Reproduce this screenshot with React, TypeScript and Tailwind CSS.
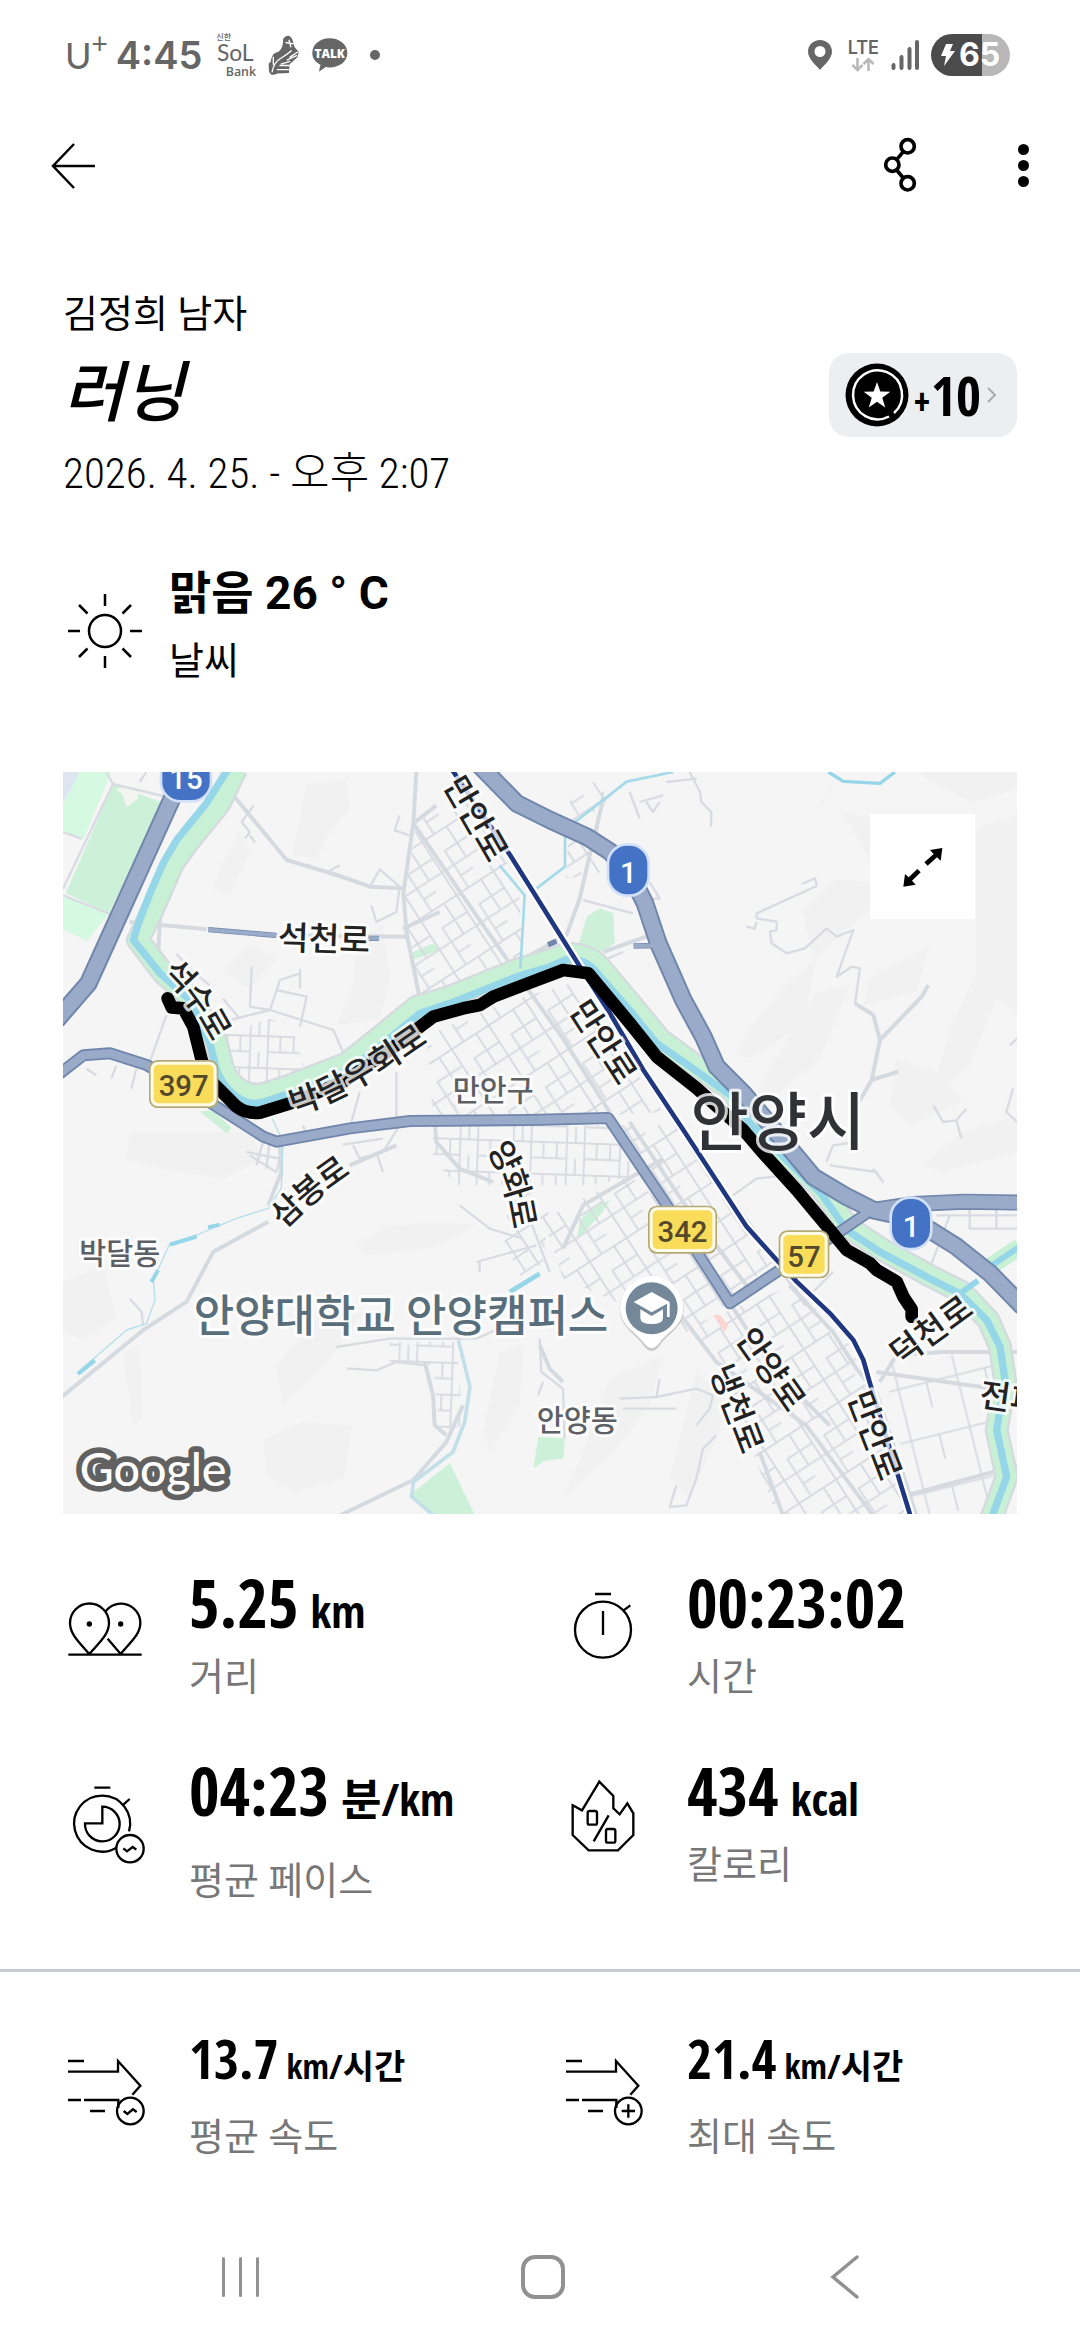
import type { ReactNode } from "react";

const NUM =
  "font-['Noto_Sans_ExtraCondensed','Open_Sans_Condensed','Roboto_Condensed','Noto_Sans_CJK_KR',sans-serif]";

function StatusBar() {
  return (
    <div className="flex h-[110px] items-center justify-between pr-[70px] pl-[65px] text-[#666]">
      <div className="flex items-center">
        <div className="flex items-start font-['Lato',sans-serif]">
          <span className="text-4xl leading-[44px]">U</span>
          <span className="text-[28px] leading-5">+</span>
        </div>
        <span className="ml-2 font-['Inter',sans-serif] text-[38px] leading-[44px] font-semibold">
          4:45
        </span>
        <svg viewBox="615 95 135 145" className="ml-3 h-12 w-11 fill-[#666]" aria-hidden="true">
          <text x="622" y="122" fontSize="25" fontWeight="500" className="font-['Noto_Sans_CJK_KR',sans-serif]">신한</text>
          <text x="624" y="186" fontSize="70" className="font-['Lato',sans-serif]">SoL</text>
          <text x="651" y="231" fontSize="38" fontWeight="600" className="font-['Open_Sans',sans-serif]">Bank</text>
        </svg>
        <svg viewBox="765 100 105 130" className="ml-2 h-11 w-9" aria-hidden="true">
          <path d="M815 118q6-11 18-10l8 8 8 26 12 14-4 16-23 20-2 26-34 2q-20 10-25-8l-1-22 6-4q4-30 22-30 16-10 15-38Z" fill="#666" />
          <path d="M782 216q6-30 24-40t34-24M858 156l-24 16M856 166l-30 14M836 184l-28 8M834 196h-30M832 208h-36M832 120l6 22M822 128l24 4M786 170v24" fill="none" stroke="#fff" strokeWidth="4" />
        </svg>
        <svg viewBox="896 110 116 110" className="ml-2 h-9 w-10" aria-hidden="true">
          <path d="M953 114c30 0 54 19 54 45s-24 44-54 44q-8 0-12-1l-21 14 5-21c-16-8-25-20-25-36 0-26 23-45 53-45Z" fill="#666" />
          <text x="953" y="174" textAnchor="middle" fontSize="36" fontWeight="800" fill="#fff" className="font-['Open_Sans',sans-serif]">TALK</text>
        </svg>
        <span className="ml-5 size-[10px] rounded-full bg-[#666]" />
      </div>
      <div className="flex items-center">
        <svg viewBox="0 0 24 32" className="h-8 w-6" aria-hidden="true">
          <path d="M12 1C5.400 1 0 6 0 12.500 0 20 8 26 12 31c4-5 12-11 12-18.500C24 6 18.600 1 12 1Zm0 17a5.500 5.500 0 1 1 0-11 5.500 5.500 0 0 1 0 11Z" fill="#666" />
        </svg>
        <div className="ml-4 flex flex-col items-center">
          <span className="font-['Inter',sans-serif] text-[18px] leading-5 font-semibold">LTE</span>
          <svg viewBox="0 0 24 14" className="h-[14px] w-6" fill="none" stroke="#b8b8b8" strokeWidth="2.500" aria-hidden="true">
            <path d="M6.500 0v12M1.500 7l5 5 5-5M17.500 13V1M12.500 6l5-5 5 5" />
          </svg>
        </div>
        <svg viewBox="0 0 28 30" className="ml-3 h-[30px] w-7" stroke="#666" strokeWidth="4" strokeLinecap="round" aria-hidden="true">
          <path d="M2.500 28v-3M10.500 28V17M18.500 28V9M26 28V2" />
        </svg>
        <div className="ml-3 flex h-[42px] w-[79px] items-center justify-center rounded-full bg-linear-to-r from-[#4b4b4b] from-65% to-[#b8b8b8] to-65% text-white">
          <svg viewBox="0 0 14 22" className="h-[22px] w-[14px]" fill="currentColor" aria-hidden="true">
            <path d="M5 0h7L9 7h5L3 22l2-10H0Z" />
          </svg>
          <span className="ml-1 font-['Inter',sans-serif] text-[32px] leading-[42px] font-bold">65</span>
        </div>
      </div>
    </div>
  );
}

function AppBar() {
  return (
    <header className="flex h-[110px] items-center justify-between pr-[43px] pl-[50px]">
      <button aria-label="뒤로" className="cursor-pointer">
        <svg viewBox="0 0 48 48" className="size-12" fill="none" stroke="#000" strokeWidth="2.500">
          <path d="M45 25H3M24 3 3 25l21 22" />
        </svg>
      </button>
      <div className="flex items-center gap-[92px]">
        <button aria-label="공유" className="cursor-pointer">
          <svg viewBox="990 408 102 168" className="h-14 w-[34px]" fill="none" stroke="#000" strokeWidth="11">
            <circle cx="1064" cy="436" r="20" />
            <circle cx="1018" cy="491" r="20" />
            <circle cx="1064" cy="547" r="20" />
            <path d="m1031 476 20-24M1031 507l20 24" />
          </svg>
        </button>
        <button aria-label="더보기" className="flex w-7 cursor-pointer flex-col items-center gap-[5px]">
          <span className="size-[11px] rounded-full bg-black" />
          <span className="size-[11px] rounded-full bg-black" />
          <span className="size-[11px] rounded-full bg-black" />
        </button>
      </div>
    </header>
  );
}

interface LabelProps {
  x: number;
  y: number;
  rotate?: number;
  size?: number;
  fill?: string;
  weight?: number;
  children: string;
}

function MapLabel({ x, y, rotate = 0, size = 100, fill = "#222", weight = 500, children }: LabelProps) {
  return (
    <text
      x={x}
      y={y - size * 0.06}
      transform={`rotate(${rotate} ${x} ${y})`}
      textAnchor="middle"
      dominantBaseline="central"
      fontSize={size}
      fontWeight={weight}
      fill={fill}
      stroke="#fff"
      strokeOpacity="0.8"
      strokeWidth="18"
      strokeLinejoin="round"
      paintOrder="stroke"
    >
      {children}
    </text>
  );
}

function CurvedLabel({ id, d, children }: { id: string; d: string; children: string }) {
  return (
    <text
      dominantBaseline="central"
      fontSize="98"
      fontWeight="500"
      fill="#222"
      stroke="#fff"
      strokeOpacity="0.8"
      strokeWidth="18"
      strokeLinejoin="round"
      paintOrder="stroke"
    >
      <path id={id} d={d} fill="none" />
      <textPath href={`#${id}`} startOffset="50%" textAnchor="middle">
        {children}
      </textPath>
    </text>
  );
}

function RoadBadge({ x, y, width, children }: { x: number; y: number; width: number; children: string }) {
  return (
    <g>
      <rect x={x} y={y} width={width} height="144" rx="26" fill="#b3aa78" />
      <rect x={x + 5} y={y + 5} width={width - 10} height="134" rx="22" fill="#fffbe6" />
      <rect x={x + 14} y={y + 14} width={width - 28} height="116" rx="15" fill="#f9dc5a" />
      <text x={x + width / 2} y={y + 109} textAnchor="middle" fontSize="88" fontWeight="500" fill="#54492a" className="font-['Roboto',sans-serif]">
        {children}
      </text>
    </g>
  );
}

function HighwayBadge({ x, y, width = 122, children }: { x: number; y: number; width?: number; children: string }) {
  return (
    <g>
      <rect x={x} y={y} width={width} height="154" rx="58" fill="#4473c5" stroke="#d3e0fa" strokeWidth="8" />
      <text x={x + width / 2} y={y + 117} textAnchor="middle" fontSize="88" fontWeight="500" fill="#fff" className="font-['Roboto',sans-serif]">
        {children}
      </text>
    </g>
  );
}

const RIVER =
  "M496 -10L430 94 341 204 300 274 261 364 226 454 211 504 291 604 381 684 441 814 461 894Q480 945 521 974T601 990L681 964 861 894 961 814 1071 724 1161 694 1361 614 1461 584 1511 562Q1560 560 1591 590L1701 716 1781 814 1901 898 2001 968 2061 1054 2181 1174 2271 1260 2351 1374 2451 1440 2601 1520 2691 1565 2771 1644 2811 1724 2826 1824 2801 1974 2831 2114 2785 2240";
const RIVERSIDE =
  "M520 -10L470 94 381 204 330 274 291 364 250 454 225 504 301 604 391 684 461 814 481 894Q500 935 531 954T601 966L671 944 851 874 951 794 1061 704 1161 674 1361 594 1461 564 1511 545Q1570 545 1606 580L1711 704 1791 802 1906 886 2006 956 2068 1044 2186 1164 2276 1250 2356 1366 2456 1432 2606 1514 2696 1560 2776 1644 2811 1724 2826 1824 2801 1974 2831 2114 2785 2240";
const HIGHWAY_15 = "M385 -40L325 84 76 634 -20 745";
const HIGHWAY_1 =
  "M1240 -30L1361 94 1461 144 1571 194 1641 239 1701 304 1746 394 1786 514 1861 684 1921 794 1961 884 2041 964 2151 1094 2201 1154 2251 1214 2351 1274 2431 1314 2501 1329 2601 1374 2681 1424 2781 1504 2880 1605";
const HIGHWAY_EAST = "M2431 1314L2551 1296 2701 1289 2880 1292";
const ARTERIAL =
  "M2411 1324L2331 1379 2141 1500 2001 1594 1911 1454 1801 1284 1636 1038 1401 1044 1041 1047 861 1069 641 1109 601 1094 461 1004 251 879 141 844 61 850 -10 905";
const RAIL =
  "M1165 -10L1341 249 1401 344 1551 584 1641 724 1741 894 1861 1074 2051 1364 2141 1464 2201 1529 2301 1624 2371 1704 2401 1764 2421 1834 2506 2114 2545 2240";
const ROUTE =
  "M314 679L326 706 361 709 391 764 416 864Q435 925 471 954L521 1004Q550 1026 591 1022L681 994 840 930 960 850 1071 764 1111 734 1201 709 1251 699 1291 674 1401 632 1501 594 1576 604 1701 754 1781 854 1901 949 2041 1074 2101 1144 2201 1254 2301 1374 2351 1434 2421 1474 2441 1494 2501 1529 2521 1574 2546 1612 2546 1634";

function RouteMap() {
  return (
    <svg viewBox="0 0 2862 2226" className="block w-full font-['Noto_Sans_CJK_KR',sans-serif]" role="img" aria-label="러닝 경로 지도">
      <defs>
        <pattern id="blocks" width="190" height="132" patternUnits="userSpaceOnUse" patternTransform="rotate(57)">
          <path d="M0 3H190M0 48H110M60 92H190M3 0V132M62 0V92M112 3V132M150 48V92" stroke="#d8dce2" strokeWidth="6" fill="none" />
        </pattern>
        <pattern id="flatBlocks" width="160" height="96" patternUnits="userSpaceOnUse" patternTransform="rotate(2)">
          <path d="M0 3H160M0 50H110M3 0V96M40 0V50M80 0V50M110 3V96M136 50V96" stroke="#d8dce2" strokeWidth="6" fill="none" />
        </pattern>
        <pattern id="wideBlocks" width="180" height="160" patternUnits="userSpaceOnUse" patternTransform="rotate(-14)">
          <path d="M0 4H180M4 0V160M90 0V80" stroke="#d8dce2" strokeWidth="6" fill="none" />
        </pattern>
      </defs>
      <rect width="2862" height="2226" fill="#f5f5f5" />

      {/* hills */}
      <g fill="#f1f1f1">
        <path d="M730 40L850 20 860 110 800 180 760 260 690 250 700 190Z" />
        <path d="M470 290L530 180 560 240 500 370 450 350Z" />
        <path d="M880 500L960 460 980 620 950 740 820 760 870 640Z" />
        <path d="M480 600L560 520 640 560 560 650Z" />
        <path d="M200 1080H560L600 1160 480 1220 300 1190 190 1160Z" />
        <path d="M0 1530L120 1480 160 1640 60 1700 0 1680Z" />
        <path d="M640 1780L760 1640 900 1620 800 1760 660 1900Z" />
        <path d="M600 2000L720 1950 870 1960 840 2120 700 2160 610 2110Z" />
        <path d="M180 1740L230 1720 240 1940 210 1960Z" />
        <path d="M880 1420L980 1360 1160 1350 1240 1360 1100 1430 900 1450Z" />
        <path d="M1310 1740L1380 1720 1370 1900 1280 2040 1260 1980Z" />
        <path d="M1640 1820L1800 1750 1760 1900 1650 2040 1500 2180 1560 2040Z" />
        <path d="M2220 420L2320 320 2480 340 2390 440 2250 560Z" />
        <path d="M2170 640L2260 560 2220 760 2060 860 2020 840 2080 740Z" />
        <path d="M2260 660L2360 640 2270 860 2150 960 2080 960Z" />
        <path d="M2560 0L2720 90 2862 50V0Z" />
        <path d="M2740 170L2862 130V720L2800 680 2720 880 2600 980 2660 780 2740 600Z" />
        <path d="M2500 860L2620 900 2700 990 2540 1060 2480 1000Z" />
        <path d="M2580 1180L2700 1080 2862 1030V1140L2640 1200Z" />
        <path d="M2250 110L2300 70 2310 30 2280 100Z" />
        <path d="M2340 120L2560 160 2600 260 2440 300Z" />
        <path d="M2420 620L2600 520 2560 660 2400 700Z" />
        <path d="M1900 1800L2000 1900 1880 2180 1820 2120Z" />
      </g>

      {/* parks */}
      <g fill="#ccf1d8">
        <path d="M0 0L60 0 0 90Z" fill="#dde5f1" />
        <path d="M50 0H145L60 204 0 176V96Z" fill="#d5f9e1" />
        <path d="M150 38L295 90 138 424 8 364Z" />
        <path d="M160 50L225 44V80L190 106 180 70Z" fill="#f4f4f0" />
        <path d="M0 372L135 428 72 506 0 472Z" fill="#d5f9e1" />
        <path d="M1546 520L1571 434 1611 409 1651 424 1655 514 1591 554Z" />
        <path d="M1641 1284L1616 1324 1541 1404 1551 1344 1591 1304Z" />
        <path d="M1041 544L1111 514 1126 534 1051 564Z" />
        <path d="M411 1019L451 1014 506 1069 491 1084Z" />
        <path d="M1161 2074L1236 2230H1101L1046 2164Z" />
        <path d="M1426 1994L1506 1999 1501 2059 1446 2066 1411 2089Z" />
      </g>

      {/* street grids */}
      <path d="M1060 160L1180 40 1320 240 1370 380 1380 590 1080 680 1025 480 1025 370Z" fill="url(#blocks)" />
      <path d="M1090 790L1330 690 1540 630 1800 1020 1636 1030 1110 1030Z" fill="url(#blocks)" />
      <path d="M1110 1060H1640L1720 1210 1590 1240H1180L1110 1160Z" fill="url(#flatBlocks)" />
      <path d="M1660 1060L1840 1060 2130 1470 2000 1580Z" fill="url(#blocks)" />
      <path d="M1440 1340L1700 1210 1800 1300 1990 1600 1870 1680 1500 1520Z" fill="url(#blocks)" />
      <path d="M1890 1660L2190 1540 2360 1720 2420 1860 2530 2230H2140L2040 1960Z" fill="url(#blocks)" />
      <path d="M2460 1780L2800 1730 2790 2230H2560Z" fill="url(#wideBlocks)" />
      <path d="M480 790L620 740 690 770 720 880 670 930 560 950 500 900Z" fill="url(#flatBlocks)" />
      <path d="M980 1710H1180L1200 1960 1130 1980 1110 1780 980 1770Z" fill="url(#flatBlocks)" />
      <path d="M1520 80L1620 10 1650 70 1560 150 1620 300 1510 320Z" fill="url(#blocks)" />
      <path d="M1350 1230L1460 1290 1440 1470 1380 1530 1320 1400Z" fill="url(#blocks)" />

      {/* minor roads */}
      <g fill="none" stroke="#d8dce2" strokeWidth="7" strokeLinejoin="round">
        <path d="M0 180L55 200M0 370L160 434M150 36L0 350M150 36L300 72M230 30L250 0M130 0L150 36" />
        <path d="M572 100L536 150 560 180 546 200M560 190L576 212M1010 130L995 175 1040 190" />
        <path d="M566 584L561 704 621 714 651 624 711 604M641 654L731 674 711 764M501 744L621 714 811 774 846 854M711 590V650" />
        <path d="M921 344L950 292 1010 344 1000 420 940 450 925 400M740 290V275M800 296L830 280" />
        <path d="M440 640L380 590 340 545M480 680L530 740" />
        <path d="M310 730L250 900M160 880L145 920M70 890L100 910M220 890L205 950" />
        <path d="M860 1069L890 960M1000 1040V900M720 1060L730 1090 760 1075" />
        <path d="M551 1140L650 1160 640 1200 560 1150M600 1110L580 1180M620 1110L610 1190M840 1118L960 1100M870 1120L890 1160 960 1140 1010 1060M940 1140L960 1200" />
        <path d="M1190 1300L1280 1370 1380 1400M1240 1470L1420 1420M1250 1465V1500M1400 1340L1460 1500" />
        <path d="M820 1725L980 1700 1240 1700 1330 1660M851 1789L940 1795 1000 1770 1090 1780M200 1580L236 1620 240 1660" />
        <path d="M1430 1700L1435 1800 1500 1850 1505 2000M1425 1870L1440 1830M1670 1880L1780 1875 1790 1820M1680 1910L1840 1910M1780 1875L1900 1850 1950 1870 1940 1910 1900 1960" />
        <path d="M1960 1990L1920 2030 1900 2120 1870 2200 1820 2205 1840 2140" />
        <path d="M2216 336L2256 319 2261 342 2081 424V439L2141 449V474L2121 479 2126 514 2171 544 2226 529 2291 469 2321 494 2371 474 2321 614 2366 584 2391 589 2376 694M2050 464L2075 470 2081 450" />
        <path d="M1880 0L1911 60 1915 90 1945 120 1944 164M1700 60L1730 140M1730 90L1800 70M1750 90L1770 120 1790 90M1810 30L1900 20" />
        <path d="M2611 1000L2640 1050 2680 1045 2710 1010M2680 1045L2695 1100M2850 950L2830 1020 2862 1050M2840 820L2862 800" />
        <path d="M2290 1170L2310 1120 2380 1110 2360 1080M2300 1180L2440 1200 2460 1230 2430 1190M2010 1270L2080 1220 2160 1210" />
        <path d="M2250 1560L2310 1500M2660 1330L2600 1490M2720 1290V1370H2862M2800 1310V1370M2620 1330H2862M1770 380L1790 380 1760 330" />
        <path d="M1560 384L1710 424M1620 60L1600 190M1565 590L1680 540" />
      </g>

      {/* collector roads */}
      <g fill="none" stroke="#d5dae0" strokeWidth="12" strokeLinejoin="round">
        <path d="M1060 0L1051 154 1021 364 1031 484 1071 684" />
        <path d="M1051 154L1200 372 1361 604 1500 800 1640 1020M1120 100L1051 154" />
        <path d="M481 34L671 264 821 309 921 344 1021 349" />
        <path d="M491 74L361 254 291 440 285 560M200 450L431 472M600 490L1030 494M1020 470L1130 420" />
        <path d="M-10 1880L241 1674 371 1589 451 1439 616 1349M651 1110L655 1200 616 1300" />
        <path d="M1085 1770L1110 1870 1115 1960 1150 1990M831 2230L1051 2124 1150 2010 1200 1900" />
        <path d="M1115 1050L1120 1110 1190 1190 1290 1230M1000 1120L860 1180" />
        <path d="M1620 84L1580 250 1550 380 1510 490 1401 550M1620 540L1760 490" />
        <path d="M2376 694L2431 729 2451 804 2426 924 2386 994M2451 804L2576 674 2596 639M2426 924L2506 899" />
        <path d="M1500 1430L1560 1300 1800 1160M1430 1720L1460 1790 1500 1830" />
        <path d="M1830 1600L1960 1770 2230 1960 2430 2230M2090 2040L2160 2230M2001 1594L2130 1790 2300 1960" />
        <path d="M2180 1540L2310 1680 2380 1790 2440 1860 2560 2230M2440 1800L2862 1860M2450 1830L2500 1750 2640 1740 2862 1740M2530 2170L2862 2080" />
        <path d="M1840 1050L2090 1400 2230 1600M1700 1050L1860 1290 2050 1540" />
      </g>

      {/* river */}
      <g fill="none" strokeLinejoin="round">
        <path d={RIVERSIDE} stroke="#d5dadf" strokeWidth="72" />
        <path d={RIVERSIDE} stroke="#c8f0d4" strokeWidth="58" />
        <path d={RIVER} stroke="#95d6e9" strokeWidth="22" />
        <path d="M2781 1484L2870 1424" stroke="#c8f0d4" strokeWidth="52" />
        <path d="M2781 1484L2870 1424" stroke="#95d6e9" strokeWidth="18" />
        <path d="M2686 1568L2745 1526" stroke="#95d6e9" strokeWidth="18" />
        <path d="M1831 0L1691 29 1531 154 1506 194 1506 284 1421 349" stroke="#a5dbe9" strokeWidth="8" />
        <path d="M1310 280L1385 370 1372 590" stroke="#a5dbe9" strokeWidth="8" />
        <path d="M2296 0L2341 28 2451 34 2496 0" stroke="#95d6e9" strokeWidth="10" />
        <path d="M628 1040L660 1110 655 1250 616 1309 521 1339 401 1389 321 1414 271 1524 276 1584 251 1654 191 1674 41 1804" stroke="#b5dfea" strokeWidth="4" />
        <path d="M321 1418L401 1394M265 1530L285 1495M45 1806L95 1765M435 1366L470 1358" stroke="#95d6e9" strokeWidth="12" />
        <path d="M1186 1704L1221 1844 1205 1950 1170 2040 1051 2130 1046 2174 1111 2230" stroke="#c3dfe8" strokeWidth="11" />
        <path d="M1340 1560L1430 1505" stroke="#95d6e9" strokeWidth="14" />
      </g>

      {/* highways */}
      <g fill="none" strokeLinejoin="round">
        <g stroke="#7186ac">
          <path d={ARTERIAL} strokeWidth="36" />
          <path d={HIGHWAY_15} strokeWidth="56" />
          <path d={HIGHWAY_1} strokeWidth="56" />
          <path d={HIGHWAY_EAST} strokeWidth="48" />
          <path d="M436 473L640 490M915 499H948M1712 522L1800 520M1455 518L1480 508" strokeWidth="16" />
        </g>
        <g stroke="#9aabc9">
          <path d={ARTERIAL} strokeWidth="25" />
          <path d={HIGHWAY_15} strokeWidth="44" />
          <path d={HIGHWAY_1} strokeWidth="44" />
          <path d={HIGHWAY_EAST} strokeWidth="38" />
          <path d="M436 473L640 490M915 499H948M1712 522L1800 520" strokeWidth="12" />
        </g>
        <path d={RAIL} stroke="#fff" strokeWidth="28" />
        <path d={RAIL} stroke="#1f3680" strokeWidth="14" />
        <path d={ROUTE} stroke="#000" strokeWidth="38" strokeLinecap="round" />
        <path d="M1950 1630L1970 1628 1996 1660 1984 1680Z" fill="#fbd5d2" />
      </g>

      <HighwayBadge x={294} y={-66} width={150}>15</HighwayBadge>
      <HighwayBadge x={1635} y={217}>1</HighwayBadge>
      <HighwayBadge x={2483} y={1277}>1</HighwayBadge>
      <RoadBadge x={258} y={864} width={208}>397</RoadBadge>
      <RoadBadge x={1755} y={1301} width={207}>342</RoadBadge>
      <RoadBadge x={2147} y={1375} width={152}>57</RoadBadge>

      <MapLabel x={1241} y={139} rotate={60}>만안로</MapLabel>
      <MapLabel x={783} y={499} rotate={2}>석천로</MapLabel>
      <CurvedLabel id="seoksu" d="M314 562C374 615 434 685 494 805">석수로</CurvedLabel>
      <CurvedLabel id="bakdal-bypass" d="M648 995C788 960 898 895 1098 755">박달우회로</CurvedLabel>
      <CurvedLabel id="yanghwa" d="M1299 1092C1345 1157 1380 1247 1398 1387">양화로</CurvedLabel>
      <CurvedLabel id="sambong" d="M622 1350C692 1280 752 1225 852 1160">삼봉로</CurvedLabel>
      <MapLabel x={1623} y={809} rotate={57}>만안로</MapLabel>
      <MapLabel x={2126} y={1791} rotate={55}>안양로</MapLabel>
      <MapLabel x={2023} y={1909} rotate={69}>냉천로</MapLabel>
      <MapLabel x={2438} y={1990} rotate={69}>만안로</MapLabel>
      <MapLabel x={2603} y={1674} rotate={-36}>덕천로</MapLabel>
      <MapLabel x={2888} y={1884} rotate={8}>전파로</MapLabel>
      <MapLabel x={1291} y={954} size={88} fill="#5c5f63">만안구</MapLabel>
      <MapLabel x={170} y={1441} size={88} fill="#5c5f63">박달동</MapLabel>
      <MapLabel x={1543} y={1943} size={88} fill="#5c5f63">안양동</MapLabel>
      <MapLabel x={2145} y={1048} size={190} fill="#303236">안양시</MapLabel>
      <MapLabel x={1014} y={1631} size={132} fill="#596e7b">안양대학교 안양캠퍼스</MapLabel>

      {/* campus pin */}
      <path d="M1766 1736q-14 0-26-18c-22-32-70-52-70-109a96 96 0 0 1 192 0c0 57-48 77-70 109q-12 18-26 18Z" fill="#9a9a9a" opacity="0.500" />
      <path d="M1766 1728q-12 0-24-16c-22-32-71-50-71-105a95 95 0 0 1 190 0c0 55-49 73-71 105q-12 16-24 16Z" fill="#fff" />
      <circle cx="1766" cy="1609" r="78" fill="#74889a" />
      <path d="M1766 1560l-54 30 54 31 46-26v40h8v-45ZM1732 1612v26q0 18 34 18t34-18v-26l-34 20Z" fill="#fff" />

      <text x="50" y="2142" fontSize="140" fontWeight="500" fill="#fff" stroke="#616161" strokeWidth="34" strokeLinejoin="round" paintOrder="stroke" className="font-['Lato',sans-serif]">
        Google
      </text>
    </svg>
  );
}

function StatIcon({ box, children }: { box: string; children: ReactNode }) {
  return (
    <svg viewBox={box} className="mt-4 size-24 shrink-0" fill="none" stroke="#000" strokeWidth="7" aria-hidden="true">
      {children}
    </svg>
  );
}

function DistanceIcon() {
  return (
    <StatIcon box="69 121 288 288">
      <path d="M85 345H305M148 343C118 308 90 284 90 250a58 58 0 0 1 117 0c0 34-29 58-59 93ZM196 216a58 58 0 0 1 105 34c0 34-30 58-59 93l-39-46" />
      <circle cx="148" cy="253" r="8" fill="#000" stroke="none" />
      <circle cx="242" cy="253" r="8" fill="#000" stroke="none" />
    </StatIcon>
  );
}

function TimerIcon() {
  return (
    <StatIcon box="63 121 288 288">
      <circle cx="189" cy="270" r="84" />
      <path d="M165 163h48M189 214v72M250 213l21-16" />
    </StatIcon>
  );
}

function PaceIcon() {
  return (
    <StatIcon box="69 691 288 288">
      <path d="M229 930a84 84 0 1 1 38-49M163 750h48M250 801l19-17M187 807v50h-52a52 52 0 1 0 52-50Z" />
      <circle cx="270" cy="933" r="41" />
      <path d="M250 932l11 9 17-13 11 8" />
    </StatIcon>
  );
}

function CalorieIcon() {
  return (
    <StatIcon box="63 685 288 288">
      <path d="M98 797l28 15 52-86 42 43v37l19 18 23-33 18 30v65l-46 46h-88l-48-46ZM161 905l45-78" />
      <rect x="143" y="814" width="28" height="41" rx="6" />
      <rect x="198" y="868" width="28" height="41" rx="6" />
    </StatIcon>
  );
}

function SpeedIcon({ max }: { max?: boolean }) {
  return (
    <StatIcon box="0 -9 288 288">
      <path d="M15 66h48M15 98h150V66l67 74-24 27M15 183h39M63 183h103v24M81 216h45" />
      <circle cx="202" cy="216" r="40" />
      {max ? <path d="M202 196v40M182 216h40" /> : <path d="M182 216l11 9 17-14 11 8" />}
    </StatIcon>
  );
}

interface StatProps {
  icon: ReactNode;
  value: string;
  unit?: string;
  label: string;
  small?: boolean;
  tall?: boolean;
}

function Stat({ icon, value, unit, label, small, tall }: StatProps) {
  return (
    <div className="flex gap-[30px]">
      {icon}
      <div className="flex flex-col">
        <p className={`${NUM} flex items-baseline font-bold ${small ? "gap-2 pb-1" : "gap-3"} ${tall ? "pb-4" : ""}`}>
          <span className={small ? "text-[54px] leading-[76px]" : "text-[66px] leading-[76px]"}>{value}</span>
          {unit && <span className={small ? "text-[34px] leading-none" : "text-[44px] leading-none"}>{unit}</span>}
        </p>
        <p className="mt-[13px] text-[38px] leading-12 text-[#777]">{label}</p>
      </div>
    </div>
  );
}

export default function App() {
  return (
    <div className="flex min-h-screen flex-col bg-white font-['Roboto','Noto_Sans_CJK_KR',sans-serif] text-black">
      <StatusBar />
      <AppBar />
      <main>
        <section className="flex items-start justify-between px-[63px] pt-[67px]">
          <div>
            <p className="text-[38px] leading-[54px]">김정희 남자</p>
            <h1 className="text-[66px] leading-[106px] font-medium italic">러닝</h1>
            <p className="font-['Roboto_Condensed','Noto_Sans_CJK_KR',sans-serif] text-[43px] leading-[52px] font-light">
              2026. 4. 25. - 오후 2:07
            </p>
          </div>
          <button className="mt-[66px] flex h-[84px] w-[188px] cursor-pointer items-center rounded-[20px] bg-[#eceeef] pl-4">
            <svg viewBox="0 0 64 64" className="size-16 shrink-0" aria-hidden="true">
              <circle cx="32" cy="32" r="31.500" />
              <path d="M44 53.500A24.500 24.500 0 1 1 49 50" fill="none" stroke="#fff" strokeWidth="2.500" />
              <path d="m32 19 3.300 9.500 10 .2-8 6.100 2.900 9.700-8.200-5.800-8.200 5.800 2.900-9.700-8-6.100 10-.2Z" fill="#fff" />
            </svg>
            <span className={`${NUM} ml-1 flex items-baseline font-bold`}>
              <span className="text-[40px]">+</span>
              <span className="text-[54px] leading-[84px]">10</span>
            </span>
            <svg viewBox="0 0 10 16" className="mr-5 ml-auto h-4 w-[10px]" fill="none" stroke="#aaa" strokeWidth="2" aria-hidden="true">
              <path d="m1 1 7 7-7 7" />
            </svg>
          </button>
        </section>

        <section className="mt-[58px] flex items-center gap-[22px] px-[63px]">
          <svg viewBox="-3 -3 84 84" className="mt-3 size-[84px]" fill="none" stroke="#000" strokeWidth="2.500" aria-hidden="true">
            <circle cx="39" cy="39" r="16" />
            <path d="M39 2v12M39 64v12M2 39h12M64 39h12M13 13l8.500 8.500M56.500 56.500l8.500 8.500M13 65l8.500-8.500M56.500 21.500l8.500-8.500" />
          </svg>
          <div>
            <p className="text-[46px] leading-[72px] font-bold">맑음 26 ° C</p>
            <p className="text-[38px] leading-[64px]">날씨</p>
          </div>
        </section>

        <section className="relative mx-[63px] mt-[79px]">
          <RouteMap />
          <button aria-label="지도 확대" className="absolute top-[42px] right-[42px] flex size-[105px] cursor-pointer items-center justify-center bg-white">
            <svg viewBox="1115 256 126 126" className="size-[42px]">
              <path d="M1236 262l-5 38-11-10-28 25-10-10 28-25-11-12ZM1119 378l5-38 11 10 26-25 10 10-26 25 11 12Z" />
            </svg>
          </button>
        </section>

        <section className="mt-[50px] grid grid-cols-2 gap-y-[51px] pr-[21px] pl-[63px]">
          <Stat icon={<DistanceIcon />} value="5.25" unit="km" label="거리" />
          <Stat icon={<TimerIcon />} value="00:23:02" label="시간" />
          <Stat icon={<PaceIcon />} value="04:23" unit="분/km" label="평균 페이스" tall />
          <Stat icon={<CalorieIcon />} value="434" unit="kcal" label="칼로리" />
        </section>

        <hr className="mt-16 border-t-[3px] border-[#c8cad2]" />

        <section className="mt-12 grid grid-cols-2 pr-[21px] pl-[63px]">
          <Stat icon={<SpeedIcon />} value="13.7" unit="km/시간" label="평균 속도" small />
          <Stat icon={<SpeedIcon max />} value="21.4" unit="km/시간" label="최대 속도" small />
        </section>
      </main>

      <nav className="mt-auto flex h-[126px] items-center justify-between pr-[212px] pl-[218px]">
        <button aria-label="최근 앱" className="flex h-11 w-11 cursor-pointer items-center justify-center gap-[14px]">
          <span className="h-10 w-[3px] rounded-full bg-[#919191]" />
          <span className="h-10 w-[3px] rounded-full bg-[#919191]" />
          <span className="h-10 w-[3px] rounded-full bg-[#919191]" />
        </button>
        <button aria-label="홈" className="size-11 cursor-pointer rounded-[14px] border-[4px] border-[#919191]" />
        <button aria-label="뒤로 가기" className="cursor-pointer">
          <svg viewBox="0 0 44 44" className="size-11" fill="none" stroke="#919191" strokeWidth="3.500" strokeLinecap="round">
            <path d="M33 2 9 22l24 20" />
          </svg>
        </button>
      </nav>
    </div>
  );
}
